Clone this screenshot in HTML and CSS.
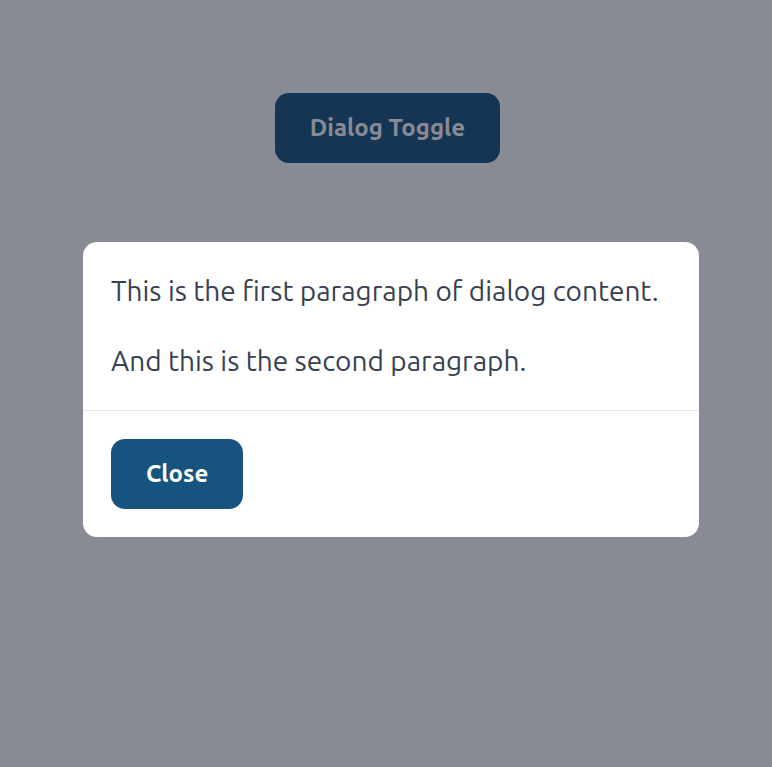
FILE: index.html
```
<!DOCTYPE html>
<html lang="en">
<head>
<meta charset="utf-8">
<meta name="viewport" content="width=device-width, initial-scale=1">
<title>Dialog</title>
<link rel="stylesheet" href="styles.css">
</head>
<body>
<main class="page">
  <button class="button" type="button">Dialog Toggle</button>
</main>
<div class="overlay">
  <div class="dialog" role="dialog" aria-modal="true">
    <div class="dialog-body">
      <p>This is the first paragraph of dialog content.</p>
      <p>And this is the second paragraph.</p>
    </div>
    <div class="dialog-footer">
      <button class="button" type="button">Close</button>
    </div>
  </div>
</div>
</body>
</html>
```

FILE: styles.css
```
* {
  box-sizing: border-box;
}

body {
  margin: 0;
  background: #fff;
  color: #374151;
  font-family: Ubuntu, "Noto Sans", "Open Sans", sans-serif;
  font-size: 28px;
  font-weight: 450;
  line-height: 42px;
}

.page {
  display: flex;
  justify-content: center;
  padding: 93px 0 0 3px;
}

.button {
  padding: 14px 35px;
  border: 0;
  border-radius: 14px;
  background: #17537f;
  color: #fff;
  font: inherit;
  font-size: 24px;
  font-weight: 600;
}

.overlay {
  position: fixed;
  inset: 0;
  display: flex;
  align-items: center;
  justify-content: center;
  padding: 12px 73px 0 83px;
  background: rgba(18, 23, 39, 0.5);
}

.dialog {
  width: 100%;
  border-radius: 14px;
  background: #fff;
}

.dialog-body {
  display: grid;
  gap: 28px;
  padding: 28px;
}

.dialog-body p {
  margin: 0;
}

.dialog-footer {
  padding: 28px;
  border-top: 1px solid #e5e7eb;
}
```
